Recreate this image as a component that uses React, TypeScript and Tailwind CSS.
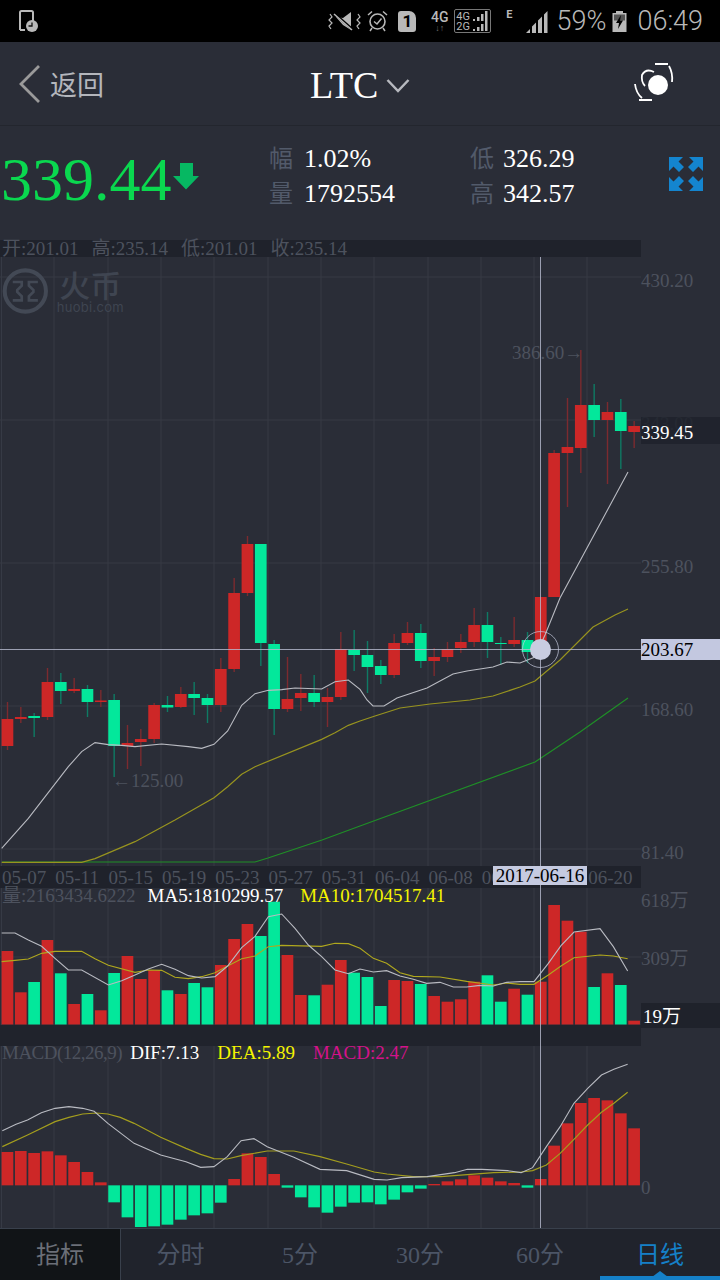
import React from "react";

type Pt = number[];

// [up?, bodyTop, bodyBottom, wickTop, wickBottom], y in page pixels
const candles: [number, number, number, number, number][] = [
  [1, 719, 746, 702, 750],
  [1, 717, 719, 707, 723],
  [0, 716, 718, 713, 737],
  [1, 682, 717, 668, 720],
  [0, 682, 691, 673, 704],
  [1, 689, 691, 678, 693],
  [0, 689, 702, 685, 717],
  [1, 700.5, 702, 690, 707],
  [0, 700, 746, 694, 777],
  [1, 743, 746, 725, 769],
  [1, 739, 742, 729, 766],
  [1, 705, 739, 703, 743],
  [0, 705, 707.5, 696, 712],
  [1, 694, 707, 687, 708],
  [0, 694, 698, 682, 715],
  [0, 698, 705, 694, 723],
  [1, 669, 705, 658, 712],
  [1, 593, 669, 578, 672],
  [1, 544, 593, 536, 596],
  [0, 544, 643, 544, 666],
  [0, 644, 709, 640, 735],
  [1, 699, 709, 657, 712],
  [1, 693, 698, 674, 711],
  [0, 693, 702, 675, 707],
  [1, 697, 702, 688, 727],
  [1, 649, 697, 632, 700],
  [0, 650, 655, 630, 671],
  [0, 655, 667, 641, 693],
  [0, 666, 675, 660, 684],
  [1, 643, 675, 634, 678],
  [1, 633, 643, 622, 645],
  [0, 633, 661, 624, 668],
  [1, 657, 661, 648, 676],
  [1, 649, 657, 642, 662],
  [1, 642, 648, 634, 653],
  [1, 625, 642, 608, 647],
  [0, 625, 642, 612, 658],
  [0, 643, 644, 637, 665],
  [1, 640, 644, 617, 647],
  [0, 640, 652, 632, 663],
  [1, 597, 652, 597, 655],
  [1, 453, 597, 450, 597],
  [1, 447, 453, 398, 507],
  [1, 405, 448, 350, 473],
  [0, 405, 420, 384, 437],
  [1, 412, 420, 402, 484],
  [0, 412, 431, 399, 469],
  [1, 426, 432, 421, 448],
];

// height of each volume bar top, y in page pixels
const volumeTops = [
  951, 992.3, 982, 940, 973.3, 1004, 994, 1010.3, 973, 956, 979, 970, 990.3, 994, 983, 987.3, 965, 939,
  924, 936, 901.7, 955, 995, 995.3, 984.7, 960, 972.7, 977, 1006, 980, 981, 984, 996, 1001.7, 999.3, 981.7,
  975.3, 1001.7, 988.7, 994.7, 981.7, 905, 920.7, 931.7, 987, 973.3, 985, 1020.7,
];

// MACD bars, y in zoom units of the lower pane
const macdEnds = [
  336, 333, 339, 334, 346, 366, 396, 427, 487, 532, 561, 559, 554, 539, 526, 520, 488, 417, 340, 351, 402,
  443, 472, 502, 518, 500, 488, 487, 493, 479, 457, 446, 432, 424, 418, 406, 413, 424, 429, 443, 417, 317,
  250, 189, 174, 181, 220, 265,
];

const upAt = candles.map((c) => c[0] === 1);

const map = (pts: Pt[], ox: number, oy: number, sx = 3) => pts.map(([x, y]) => [ox + x / sx, oy + y / 3]);
const line = (pts: Pt[]) => pts.map((p) => p.join(",")).join(" ");

const ma5 = [
  ...map(
    [[5, 625], [85, 535], [205, 380], [245, 335], [285, 308], [325, 314], [365, 316], [405, 320], [485, 312], [565, 320], [605, 325], [642, 313], [683, 273], [725, 196], [765, 161], [805, 151], [845, 149], [885, 144], [965, 147], [1005, 125], [1045, 120], [1080, 148]],
    0, 640
  ),
  [367, 700], [373, 706], [384, 706], [397, 698],
  [427, 688], [453, 674], [467, 671], [480, 669], [493, 667], [507, 662], [520, 663], [535, 657], [545, 635], [560, 598], [628, 472],
];

const ma10 = [
  ...map(
    [[5, 667], [245, 667], [285, 656], [405, 605], [525, 540], [642, 473], [683, 440], [725, 403], [765, 380], [965, 298], [1005, 278], [1045, 256], [1080, 243]],
    0, 640
  ),
  [375, 716], [400, 708], [430, 704], [470, 700], [493, 696], [520, 687], [535, 681], [560, 660], [593, 627], [615, 615], [628, 609],
];

const ma20 = [[2, 862], [255, 862], [268, 858], [322, 840], [360, 826], [535, 762], [580, 732], [628, 698]];

const volMa5 = [
  ...map(
    [[5, 219], [45, 219], [85, 240], [125, 259], [165, 295], [205, 330], [245, 330], [325, 375], [365, 362], [405, 345], [445, 327], [485, 313], [525, 328], [565, 347], [605, 354], [645, 350], [683, 318], [725, 263], [765, 229], [805, 170], [845, 162], [885, 205], [925, 255], [965, 290], [1005, 330], [1045, 341]],
    0, 860
  ),
  ...map(
    [[0, 327], [40, 336], [80, 332], [120, 348], [160, 358], [200, 370], [240, 367], [280, 381], [320, 381], [360, 376], [400, 378], [440, 367], [480, 365], [522, 365], [565, 310], [603, 257], [642, 216], [720, 206], [760, 260], [803, 333]],
    360, 860
  ),
];

const volMa10 = [
  ...map(
    [[5, 305], [45, 301], [85, 297], [125, 280], [165, 274], [245, 274], [285, 296], [325, 316], [405, 337], [445, 330], [485, 331], [525, 352], [565, 356], [605, 350], [645, 338], [683, 318], [725, 296], [765, 288], [805, 260], [845, 256], [965, 259], [1005, 250], [1045, 251]],
    0, 860
  ),
  ...map(
    [[0, 265], [40, 295], [80, 310], [120, 338], [160, 349], [240, 351], [320, 364], [400, 375], [440, 369], [480, 373], [522, 373], [565, 345], [603, 318], [642, 293], [720, 285], [760, 288], [803, 296]],
    360, 860
  ),
];

const dif = map(
  [[5, 272], [35, 253], [60, 240], [90, 218], [120, 205], [150, 200], [180, 205], [205, 214], [235, 250], [292, 310], [350, 345], [405, 365], [437, 382], [466, 380], [495, 350], [525, 302], [553, 296], [582, 320], [640, 352], [697, 388], [755, 392], [815, 418], [843, 420], [875, 413], [930, 410], [990, 398], [1018, 388], [1050, 388], [1105, 392], [1135, 398], [1160, 383], [1190, 320], [1220, 260], [1250, 190], [1280, 145], [1310, 105], [1337, 88], [1367, 73]],
  0, 1040, 2.178
);

const dea = map(
  [[5, 320], [60, 285], [120, 245], [150, 232], [180, 222], [210, 219], [235, 222], [262, 232], [292, 250], [350, 292], [405, 325], [437, 343], [466, 356], [495, 357], [525, 347], [582, 333], [640, 333], [697, 350], [755, 372], [815, 396], [843, 402], [900, 410], [960, 410], [1018, 404], [1075, 398], [1135, 396], [1160, 392], [1190, 375], [1220, 340], [1250, 298], [1280, 255], [1310, 217], [1337, 190], [1367, 157]],
  0, 1040, 2.178
);

const GREEN = "#03e89b";
const RED = "#cd2727";
const gridX = [1.5, 54, 108, 161, 214, 268, 321, 374, 428, 481, 534, 587];
const barX = (i: number) => 1.6 + (i * 40) / 3;
const dates = ["05-07", "05-11", "05-15", "05-19", "05-23", "05-27", "05-31", "06-04", "06-08", "06-12", "06-16", "06-20"];

function Grid({ top, bottom, rows = [] }: { top: number; bottom: number; rows?: number[] }) {
  return (
    <g stroke="#363a45" strokeWidth="1">
      {gridX.map((x) => (
        <line key={x} x1={x} x2={x} y1={top} y2={bottom} />
      ))}
      {rows.map((y) => (
        <line key={y} x1="0" x2="641" y1={y} y2={y} />
      ))}
    </g>
  );
}

function MainChart() {
  return (
    <svg className="block w-[641px] h-[609px]" viewBox="0 257 641 609">
      <Grid top={257} bottom={866} rows={[277, 420, 563, 706, 849]} />
      {candles.map(([up, top, bottom, wickTop, wickBottom], i) => (
        <g key={i}>
          <line
            x1={barX(i) + 5.9}
            x2={barX(i) + 5.9}
            y1={wickTop}
            y2={wickBottom}
            stroke={up ? "#7c2a2f" : "#0f7a64"}
            strokeWidth="1.4"
          />
          <rect x={barX(i)} y={top} width="11.7" height={bottom - top} fill={up ? RED : GREEN} />
        </g>
      ))}
      <polyline points={line(ma20)} fill="none" stroke="#1f8f27" strokeWidth="1.2" />
      <polyline points={line(ma10)} fill="none" stroke="#98941f" strokeWidth="1.2" />
      <polyline points={line(ma5)} fill="none" stroke="#b9bbc2" strokeWidth="1.1" />
    </svg>
  );
}

function VolumeChart() {
  return (
    <svg className="block w-[641px] h-[137px]" viewBox="0 888 641 137">
      <Grid top={888} bottom={1025} rows={[957]} />
      {volumeTops.map((top, i) => (
        <rect key={i} x={barX(i)} y={top} width="11.7" height={1024.5 - top} fill={upAt[i] ? RED : GREEN} />
      ))}
      <polyline points={line(volMa10)} fill="none" stroke="#b0a81e" strokeWidth="1.1" />
      <polyline points={line(volMa5)} fill="none" stroke="#b9bbc2" strokeWidth="1.1" />
    </svg>
  );
}

function MacdChart() {
  const zero = 436;
  return (
    <svg className="block w-[641px] h-[182px]" viewBox="0 1046 641 182">
      <Grid top={1046} bottom={1228} />
      {macdEnds.map((end, i) => {
        const y1 = 1040 + Math.min(end, zero) / 3;
        const y2 = 1040 + Math.max(end, zero) / 3;
        return <rect key={i} x={barX(i)} y={y1} width="11.7" height={y2 - y1} fill={end < zero ? RED : GREEN} />;
      })}
      <polyline points={line(dea)} fill="none" stroke="#a49e1e" strokeWidth="1.2" />
      <polyline points={line(dif)} fill="none" stroke="#b9bbc2" strokeWidth="1.1" />
    </svg>
  );
}

function HuobiMark() {
  return (
    <svg className="w-[52px] h-[52px]" viewBox="1 264 52 52" fill="none" stroke="#434955">
      <circle cx="27" cy="290" r="23" strokeWidth="4.5" />
      <path
        d="M13 280H23V284L18 289V291L23 296V300.500H13M41 280H31V284L36 289V291L31 296V300.500H41"
        strokeWidth="3"
      />
    </svg>
  );
}

function StatusBar() {
  return (
    <div className="h-[42px] bg-black flex items-center text-[#b9b9b9] font-['Roboto',sans-serif]">
      <svg className="ml-[17px] w-[22px] h-[24px]" viewBox="0 0 22 24">
        <path d="M3 21V3.500Q3 2 4.500 2H14.500Q16 2 16 3.500V12M3 21H8" fill="none" stroke="#b9b9b9" strokeWidth="2" />
        <circle cx="15" cy="17" r="6" fill="#b9b9b9" />
        <path d="M15 13.500V17H11.500" fill="none" stroke="#111" strokeWidth="1.300" />
      </svg>
      <div className="flex-1" />
      <svg className="w-[33px] h-[20px]" viewBox="0 0 33 20">
        <path d="M8 6L15 7L23 1V19L15 14Z" fill="#b9b9b9" />
        <path d="M7 3L24 18" stroke="#000" strokeWidth="2.500" />
        <path d="M6 3L24 19" stroke="#b9b9b9" strokeWidth="1.500" />
        <path d="M2 3L4 6L1 9L4 12L1 15L3 18M30 3L32 6L29 9L32 12L29 15L31 18" fill="none" stroke="#b9b9b9" strokeWidth="1.200" />
      </svg>
      <svg className="ml-[6px] w-[21px] h-[22px]" viewBox="0 0 21 22" fill="none" stroke="#b9b9b9">
        <circle cx="10.500" cy="11.500" r="7.500" strokeWidth="1.600" />
        <path d="M7 11.500L10 14L14.500 8.500" strokeWidth="1.500" />
        <path d="M1 5L5 1.500M20 5L16 1.500M5 18L3 21M16 18L18 21" strokeWidth="1.500" />
      </svg>
      <div
        className="ml-[10px] w-[18px] h-[21px] bg-[#b9b9b9] rounded-[3px] rounded-tr-[7px] flex items-center justify-center text-black text-[17px] font-bold leading-none"
      >
        1
      </div>
      <div className="ml-[15px] w-[17px] flex flex-col items-center text-[#b9b9b9]">
        <span className="text-[14px] font-medium leading-[14px]">4G</span>
        <span className="text-[9px] leading-[9px] text-[#6f6f6f]">↓↑</span>
      </div>
      <div className="ml-[6px] w-[37px] h-[24px] border border-[#777] rounded-[2px] flex flex-col justify-center px-[1px]">
        {["4G", "2G"].map((label) => (
          <div key={label} className="flex items-center justify-between h-[10px]">
            <span className="text-[11px] leading-none">{label}</span>
            <svg className="w-[16px] h-[10px]" viewBox="0 0 16 10" fill="#b9b9b9">
              <rect x="0" y="8" width="2" height="2" />
              <rect x="4" y="6" width="2.500" height="4" />
              <rect x="8" y="3" width="2.500" height="7" />
              <rect x="12" y="0" width="2.500" height="10" />
            </svg>
          </div>
        ))}
      </div>
      <span className="ml-[15px] mb-[13px] text-[11px] font-bold leading-none">E</span>
      <svg className="ml-[13px] w-[22px] h-[23px]" viewBox="0 0 22 23" fill="#b9b9b9">
        <path d="M0 23L4 19V23ZM6 23V16.500L10 12.500V23ZM12 23V10.500L16 6.500V23ZM18 23V4.500L21.500 1V23Z" />
      </svg>
      <span className="ml-[9px] text-[27px] font-light leading-none">59%</span>
      <svg className="ml-[6px] w-[15px] h-[21px]" viewBox="0 0 15 21">
        <rect x="4" y="0" width="7" height="3" fill="#b9b9b9" />
        <rect x="0.500" y="2" width="14" height="19" fill="#b9b9b9" />
        <rect x="2" y="3.500" width="11" height="6" fill="#555" />
        <path d="M9 4L4 12H7L6 18L11 9.500H8Z" fill="#000" />
      </svg>
      <span className="ml-[10px] mr-[17px] text-[27px] font-light leading-none">06:49</span>
    </div>
  );
}

function Header() {
  return (
    <div className="h-[84px] flex items-center border-b border-[#23262e]">
      <svg className="ml-[18px] w-[24px] h-[40px]" viewBox="0 0 24 40" fill="none">
        <path d="M21 2L3 20L21 38" stroke="#9a9a9a" strokeWidth="2.800" />
      </svg>
      <span className="ml-[8px] mt-[5px] w-[260px] text-[27px] leading-none text-[#b4b6bc]">返回</span>
      <span className="mt-[2px] text-[38px] leading-none text-white">LTC</span>
      <svg className="ml-[8px] mt-[4px] w-[24px] h-[16px]" viewBox="0 0 24 16" fill="none">
        <path d="M1.500 2L12 13L22.500 2" stroke="#b7b9bf" strokeWidth="2.500" />
      </svg>
      <svg className="ml-[222px] w-[44px] h-[44px]" viewBox="632 60 44 44" fill="none" stroke="#fff" strokeWidth="1.800">
        <path d="M655 62H668M669 64Q673 71 672 80M639 98H652M635 82Q636 91 642 96M654 70Q646 66 642 73Q641 80 645 84" />
        <circle cx="658" cy="83" r="10" fill="#fff" stroke="none" />
      </svg>
    </div>
  );
}

function Quote() {
  const Row = ({ label, value, w }: { label: string; value: string; w: string }) => (
    <div className="h-[35px] flex items-center">
      <span className={`${w} text-[24px] leading-none text-[#525a6a]`}>{label}</span>
      <span className="text-[26px] leading-none text-white">{value}</span>
    </div>
  );
  return (
    <div className="h-[114px] flex">
      <div className="w-[269px] pl-[1px] pt-[17px] flex">
        <span className="text-[62px] leading-[72px] text-[#0ad84f]">339.44</span>
        <svg className="mt-[20px] w-[27px] h-[27px]" viewBox="0 0 27 27" fill="#06b862">
          <path d="M8 0H21V13H27L14 26.500L1 13H8Z" />
        </svg>
      </div>
      <div className="w-[201px] pt-[15px]">
        <Row w="w-[35px]" label="幅" value="1.02%" />
        <Row w="w-[35px]" label="量" value="1792554" />
      </div>
      <div className="w-[199px] pt-[15px]">
        <Row w="w-[33px]" label="低" value="326.29" />
        <Row w="w-[33px]" label="高" value="342.57" />
      </div>
      <svg className="mt-[31px] w-[34px] h-[34px]" viewBox="0 0 34 34" fill="#1485cf">
        <path d="M0 0H14L9.500 4.500L15 10L10 15L4.500 9.500L0 14ZM34 0V14L29.500 9.500L24 15L19 10L24.500 4.500L20 0ZM0 34V20L4.500 24.500L10 19L15 24L9.500 29.500L14 34ZM34 34H20L24.500 29.500L19 24L24 19L29.500 24.500L34 20Z" />
      </svg>
    </div>
  );
}

function ChartArea() {
  return (
    <div className="relative h-[988px] text-[19px] leading-none text-[#4d525e]">
      <div className="h-[17px] w-[641px] bg-[#1f222b] flex items-center pl-[2px] gap-[13px] whitespace-nowrap">
        <span>开:201.01</span>
        <span>高:235.14</span>
        <span>低:201.01</span>
        <span>收:235.14</span>
      </div>

      <div className="relative flex h-[609px]">
        <MainChart />
        <div className="w-[79px] pt-[14px]">
          {["430.20", "343.00", "255.80", "168.60", "81.40"].map((v) => (
            <div key={v} className="h-[143px] leading-[20px]">
              {v}
            </div>
          ))}
        </div>
        <div className="absolute left-[2px] top-[8px] w-[122px] flex items-center">
          <HuobiMark />
          <div className="ml-[8px] flex flex-col items-center text-[#3f4551] font-['Noto_Sans_CJK_SC',sans-serif]">
            <span className="text-[31px] leading-[32px] font-medium">火币</span>
            <span className="text-[13px] leading-[14px] tracking-[0.3px] font-['Inter',sans-serif]">huobi.com</span>
          </div>
        </div>
        <span className="absolute left-[512px] top-[86px]">386.60→</span>
        <span className="absolute left-[112px] top-[514px]">←125.00</span>
      </div>

      <div className="h-[22px] w-[641px] bg-[#1f222b] flex items-center pl-[2px] whitespace-nowrap">
        {dates.map((d) => (
          <span key={d} className="w-[53.300px] shrink-0">
            {d}
          </span>
        ))}
      </div>

      <div className="relative flex h-[137px]">
        <VolumeChart />
        <div className="w-[79px] pt-[3px]">
          <div className="h-[58px] leading-[20px]">618万</div>
          <div className="leading-[20px]">309万</div>
        </div>
        <div className="absolute left-0 top-[-2px] pl-[2px] flex gap-[12px] whitespace-nowrap leading-[20px]">
          <span>量:2163434.6222</span>
          <span className="text-white">MA5:1810299.57</span>
          <span className="text-[#f4f400] ml-[5px]">MA10:1704517.41</span>
        </div>
      </div>

      <div className="h-[21px] w-[641px] bg-[#20232c]" />

      <div className="relative flex h-[182px]">
        <MacdChart />
        <div className="w-[79px] pt-[132px] leading-[20px]">0</div>
        <div className="absolute left-0 top-[-3px] pl-[2px] flex gap-[18px] whitespace-nowrap leading-[20px]">
          <span className="mr-[-10px] tracking-[-0.5px]">MACD(12,26,9)</span>
          <span className="text-white">DIF:7.13</span>
          <span className="text-[#f4f400]">DEA:5.89</span>
          <span className="text-[#d4128a]">MACD:2.47</span>
        </div>
      </div>

      {/* crosshair and its tags sit over all panes */}
      <div className="absolute left-[540px] top-[17px] bottom-0 w-px bg-[#b8bccf]/80" />
      <div className="absolute left-0 top-[409px] w-[641px] h-px bg-[#b8bccf]/80" />
      <div className="absolute left-[522px] top-[391px] w-[37px] h-[37px] rounded-full border border-[#c5c9dd]/70" />
      <div className="absolute left-[530px] top-[399px] w-[21px] h-[21px] rounded-full bg-[#c8cce0]" />
      <div className="absolute left-[641px] top-[177px] w-[79px] h-[27px] bg-[#1f222b]/85 text-white pt-[6px] leading-[20px]">
        339.45
      </div>
      <div className="absolute left-[641px] top-[399px] w-[79px] h-[21px] bg-[#c3c8e0] text-black leading-[21px]">
        203.67
      </div>
      <div className="absolute left-[493px] top-[626px] w-[94px] h-[19px] bg-[#c5cae0] text-black leading-[19px] text-center">
        2017-06-16
      </div>
      <div className="absolute left-[641px] top-[763px] w-[79px] h-[25px] bg-[#1f222b] text-white pt-[4px] leading-[20px] pl-[2px]">
        19万
      </div>
    </div>
  );
}

function TabBar() {
  const tabs = ["分时", "5分", "30分", "60分"];
  return (
    <div className="relative h-[52px] grid grid-cols-6 bg-[#20232c] border-t border-[#39404c] text-[24px] leading-none text-[#4c5566]">
      <div className="flex items-center justify-center bg-[#111417] text-[#6b6f78]">指标</div>
      {tabs.map((t, i) => (
        <div key={t} className={i === 0 ? "flex items-center justify-center border-l border-[#39404c]" : "flex items-center justify-center"}>
          {t}
        </div>
      ))}
      <div className="flex items-center justify-center text-[#1580c8]">日线</div>
      <div className="absolute right-0 bottom-0 w-[120px] h-[4px] bg-[#1580c8]" />
      <div className="absolute right-[52px] bottom-[3px] w-0 h-0 border-x-[8px] border-x-transparent border-b-[6px] border-b-[#1580c8]" />
    </div>
  );
}

export default function App() {
  return (
    <div className="w-[720px] h-[1280px] overflow-hidden bg-[#2a2d37] font-['Liberation_Serif','Noto_Sans_CJK_SC',serif]">
      <StatusBar />
      <Header />
      <Quote />
      <ChartArea />
      <TabBar />
    </div>
  );
}
